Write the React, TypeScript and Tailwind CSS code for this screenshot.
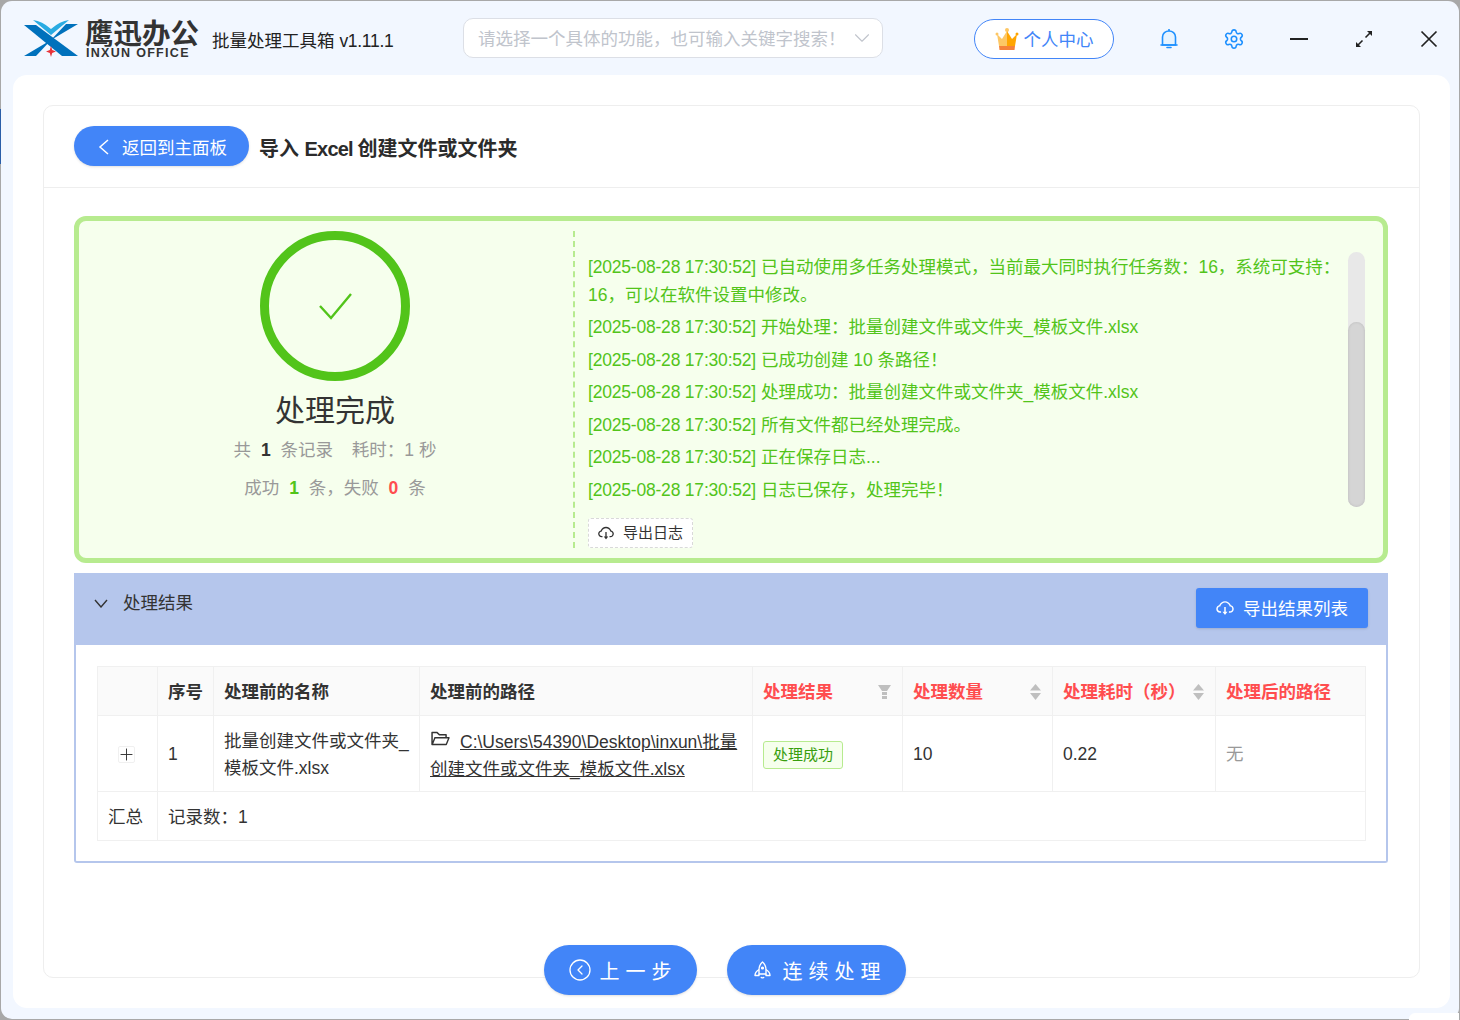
import React from 'react';
import { ChevronDown, CircleChevronLeft, Plus, Settings } from 'lucide-react';
import { AiOutlineCloudDownload, AiOutlineFolderOpen } from 'react-icons/ai';

const logLines = [
  '已自动使用多任务处理模式，当前最大同时执行任务数：16，系统可支持：16，可以在软件设置中修改。',
  '开始处理：批量创建文件或文件夹_模板文件.xlsx',
  '已成功创建 10 条路径！',
  '处理成功：批量创建文件或文件夹_模板文件.xlsx',
  '所有文件都已经处理完成。',
  '正在保存日志...',
  '日志已保存，处理完毕！',
];

const Logo = () => (
  <svg width="54" height="37" viewBox="0 0 54 37">
    <polygon points="0,5 12,5 54,36 38,36" fill="#0071bc" />
    <polygon points="54,4 42,4 12,36 0,36" fill="#0071bc" />
    <path d="M9 0 Q18 1 27 9 Q36 1 45 0 L27 15 Z" fill="#29abe2" />
    <path d="M27 26 L28.2 30 L32 31.5 L28.2 33 L27 37 L25.8 33 L22 31.5 L25.8 30 Z" fill="#e8343a" />
  </svg>
);

const Crown = () => (
  <svg width="24" height="24" viewBox="0 0 24 24">
    <circle cx="12" cy="3" r="2" fill="#fdc765" />
    <circle cx="2" cy="7" r="1.5" fill="#fdc765" />
    <circle cx="22" cy="7" r="1.5" fill="#ffa500" />
    <path d="M2 7 L7 12 L12 4 L12 19 L4 19 Z" fill="#fdc765" />
    <path d="M22 7 L17 12 L12 4 L12 19 L20 19 Z" fill="#ffa500" />
    <path d="M4 19 H20 L19.5 23 H4.5 Z" fill="#f5813a" />
  </svg>
);

const Bell = () => (
  <svg width="18" height="22" viewBox="0 0 18 22" fill="none" stroke="#1e90ff" strokeWidth="1.6">
    <path d="M2.5 17 V9 C2.5 5.5 5.5 3 9 3 C12.5 3 15.5 5.5 15.5 9 V17 Z" fill="#e6f3ff" />
    <path d="M1 17 H17" strokeLinecap="round" />
    <path d="M9 1 V3" />
    <path d="M7 19.5 H11" strokeLinecap="round" />
  </svg>
);

const Expand = () => (
  <svg width="18" height="18" viewBox="0 0 18 18" fill="#222" stroke="#222">
    <path d="M10.5 7.5 L16 2" strokeWidth="1.6" />
    <polygon points="12,1 17,1 17,6" stroke="none" />
    <path d="M7.5 10.5 L2 16" strokeWidth="1.6" />
    <polygon points="1,12 1,17 6,17" stroke="none" />
  </svg>
);

const Close = () => (
  <svg width="18" height="18" viewBox="0 0 18 18" fill="none" stroke="#222" strokeWidth="1.7">
    <path d="M1.5 1.5 L16.5 16.5 M16.5 1.5 L1.5 16.5" />
  </svg>
);

const Rocket = () => (
  <svg width="17" height="18" viewBox="0 0 17 18" fill="none" stroke="#fff" strokeWidth="1.4" strokeLinejoin="round">
    <path d="M8.5 1 C6 3 5 6 5 9 V13 H12 V9 C12 6 11 3 8.5 1 Z" />
    <path d="M5 8.5 C2.5 10 1 12 1 14.5 H5 V13" />
    <path d="M12 8.5 C14.5 10 16 12 16 14.5 H12 V13" />
    <circle cx="8.5" cy="7" r="0.9" fill="#fff" />
    <path d="M7 16 C7.5 17.2 9.5 17.2 10 16" />
  </svg>
);

const SortIcon = () => (
  <svg width="11" height="16" viewBox="0 0 11 16" fill="#bfbfbf">
    <polygon points="5.5,0 11,6.5 0,6.5" />
    <polygon points="0,9 11,9 5.5,16" />
  </svg>
);

const FilterIcon = () => (
  <svg width="13" height="14" viewBox="0 0 13 14" fill="#bfbfbf">
    <polygon points="0,0 13,0 9,6 4,6" />
    <rect x="4" y="7" width="5" height="3" />
    <rect x="4" y="11" width="5" height="3" />
  </svg>
);

const th = 'border-r border-[#f0f0f0] px-[10px] pt-[2px] text-left font-bold text-[17.5px]';
const td = 'border-r border-[#f0f0f0] px-[10px] pt-[2px] text-[17.5px] font-normal leading-[27px]';

export default function App() {
  return (
    <div className="relative h-[1020px] w-[1460px] overflow-hidden bg-[#a8a8a8] pl-px pt-px font-['Liberation_Sans','Noto_Sans_CJK_SC',sans-serif] text-[#333]">
      {/* bits of whatever sits behind the window */}
      <div className="absolute left-0 top-[109px] h-[55px] w-px bg-[#2a5ea8]" />
      <div className="absolute bottom-0 right-px z-10 h-[7px] w-[50px] rounded-tl-[6px] bg-white" />

      <div className="flex h-[1018px] w-[1458px] flex-col rounded-[11px] bg-[#f2f7ff]">
        {/* title bar */}
        <div className="flex h-[74px] shrink-0 items-center pt-[2px]">
          <div className="ml-[23px] -mt-[2px]"><Logo /></div>
          <div className="ml-[7px] flex w-[114px] flex-col">
            <span className="text-[28.5px] font-bold leading-[30px] text-[#333]">鹰迅办公</span>
            <span className="-mt-[2px] ml-px whitespace-nowrap text-[12.5px] font-bold leading-[13px] tracking-[1.3px] text-[#333]">INXUN OFFICE</span>
          </div>
          <span className="ml-[13px] mt-[4px] w-[251px] whitespace-nowrap text-[17.5px] text-[#222]">
            批量处理工具箱 <span className="tracking-[-0.3px]">v1.11.1</span>
          </span>
          <div className="-mt-[2px] flex h-[40px] w-[420px] items-center justify-between rounded-[10px] border border-[#dcdfe6] bg-white pl-[14px] pr-[7px] text-[17.5px] text-[#c0c4cc]">
            <span className="mt-[2px] whitespace-nowrap">请选择一个具体的功能，也可输入关键字搜索！</span>
            <ChevronDown size={26} strokeWidth={1} />
          </div>
          <div className="ml-[91px] flex h-[40px] w-[140px] items-center justify-center gap-[5px] rounded-full border border-[#4285f8] bg-white text-[17.5px] text-[#4285f8]">
            <Crown />
            <span className="mt-[2px]">个人中心</span>
          </div>
          <div className="ml-[46px] flex w-[18px] justify-center"><Bell /></div>
          <div className="ml-[45px] flex w-[22px] justify-center">
            <Settings size={22} strokeWidth={1.7} color="#1e90ff" />
          </div>
          <div className="ml-[45px] h-[2px] w-[18px] bg-[#222]" />
          <div className="ml-[47px]"><Expand /></div>
          <div className="ml-[47px]"><Close /></div>
        </div>

        {/* main panel */}
        <div className="ml-[12px] flex h-[933px] w-[1437px] flex-col rounded-[14px] bg-white px-[30px] pt-[30px]">
          <div className="flex h-[873px] shrink-0 flex-col rounded-[10px] border border-[#eeeeee]">
            <div className="flex h-[82px] shrink-0 items-center border-b border-[#eeeeee] pl-[30px]">
              <button className="mb-[2px] flex h-[40px] w-[175px] items-center rounded-full bg-[#4285f8] pl-[24px] text-[17.5px] text-white shadow-sm">
                <svg className="mt-[2px]" width="11" height="16" viewBox="0 0 11 16" fill="none" stroke="#fff" strokeWidth="1.5">
                  <path d="M10 1 L2 8 L10 15" />
                </svg>
                <span className="ml-[13px] mt-[6px]">返回到主面板</span>
              </button>
              <span className="ml-[10px] mt-[4px] text-[20px] font-bold text-[#2b2b2b]">
                导入 <span className="tracking-[-0.8px]">Excel </span>创建文件或文件夹
              </span>
            </div>

            <div className="px-[30px] pt-[28px]">
              {/* status box */}
              <div className="flex h-[347px] w-[1314px] rounded-[12px] border-[5px] border-[#b7eb8f] bg-[#f6ffed] py-[10px]">
                <div className="flex w-[496px] shrink-0 flex-col items-center border-r-2 border-dashed border-[#b7eb8f] pl-[18px]">
                  <div className="flex h-[150px] w-[150px] items-center justify-center rounded-full border-[9px] border-[#52c41a]">
                    <svg width="33" height="27" viewBox="0 0 33 27" fill="none" stroke="#52c41a" strokeWidth="2.4">
                      <path d="M1 13 L12 25 L32 1" />
                    </svg>
                  </div>
                  <div className="mt-[10px] text-[30px] leading-[40px] text-[#333]">处理完成</div>
                  <div className="mt-[9px] text-[17.5px] leading-[20px] text-[#999]">
                    共 <b className="mx-[5px] text-[#333]">1</b> 条记录 <span className="ml-[14px]">耗时：1 秒</span>
                  </div>
                  <div className="mt-[18px] text-[17.5px] leading-[20px] text-[#999]">
                    成功 <b className="mx-[5px] text-[#52c41a]">1</b> 条，失败 <b className="mx-[5px] text-[#ff4d4f]">0</b> 条
                  </div>
                </div>
                <div className="flex min-w-0 flex-1 pl-[13px]">
                  <div className="flex w-[760px] shrink-0 flex-col">
                    <div className="mt-[23px] flex w-[754px] flex-col gap-[5px] text-[17.5px] leading-[27.5px] text-[#52c41a]">
                      {logLines.map((line, i) => (
                        <div key={i}>
                          <span className="tracking-[-0.2px]">[2025-08-28 17:30:52]</span> {line}
                        </div>
                      ))}
                    </div>
                    <button className="mt-[14px] flex h-[30px] w-[105px] items-center rounded-[3px] border border-dashed border-[#d9d9d9] bg-white pl-[8px] text-[15px] text-[#333]">
                      <AiOutlineCloudDownload size={18} />
                      <span className="ml-[8px]">导出日志</span>
                    </button>
                  </div>
                  <div className="mt-[21px] flex h-[255px] w-[17px] flex-col justify-end rounded-full bg-[#e8e8e8]">
                    <div className="h-[185px] rounded-full bg-[#d5d5d5] shadow-[inset_0_0_3px_rgba(0,0,0,0.12)]" />
                  </div>
                </div>
              </div>

              {/* result header */}
              <div className="mt-[10px] flex h-[72px] w-[1314px] items-start justify-between bg-[#b5c6ec] pl-[20px] pr-[20px]">
                <div className="mt-[17px] flex items-center text-[17.5px] text-[#333]">
                  <svg width="14" height="9" viewBox="0 0 14 9" fill="none" stroke="#333" strokeWidth="1.4">
                    <path d="M1 1 L7 8 L13 1" />
                  </svg>
                  <span className="ml-[15px]">处理结果</span>
                </div>
                <button className="mt-[15px] flex h-[40px] w-[172px] items-center rounded-[3px] bg-[#4285f8] pl-[19px] text-[17.5px] text-white shadow-sm">
                  <AiOutlineCloudDownload size={20} />
                  <span className="ml-[8px] mt-[2px]">导出结果列表</span>
                </button>
              </div>

              {/* result body */}
              <div className="h-[218px] w-[1314px] rounded-b-[3px] border-x-2 border-b-2 border-[#b5c6ec] px-[21px] pt-[21px]">
                <table className="w-[1268px] table-fixed border-collapse border border-[#f0f0f0]">
                  <colgroup>
                    <col className="w-[60px]" />
                    <col className="w-[56px]" />
                    <col className="w-[206px]" />
                    <col className="w-[333px]" />
                    <col className="w-[150px]" />
                    <col className="w-[150px]" />
                    <col className="w-[163px]" />
                    <col className="w-[150px]" />
                  </colgroup>
                  <thead>
                    <tr className="h-[49px] border-b border-[#f0f0f0] bg-[#fafafa]">
                      <th className={th} />
                      <th className={th}>序号</th>
                      <th className={th}>处理前的名称</th>
                      <th className={th}>处理前的路径</th>
                      <th className={`${th} text-[#ff4d4f]`}>
                        <div className="flex items-center justify-between pr-[1px]">处理结果<FilterIcon /></div>
                      </th>
                      <th className={`${th} text-[#ff4d4f]`}>
                        <div className="flex items-center justify-between pr-[1px]">处理数量<SortIcon /></div>
                      </th>
                      <th className={`${th} text-[#ff4d4f]`}>
                        <div className="flex items-center justify-between whitespace-nowrap pr-[1px]">处理耗时（秒）<SortIcon /></div>
                      </th>
                      <th className={`${th} text-[#ff4d4f]`}>处理后的路径</th>
                    </tr>
                  </thead>
                  <tbody>
                    <tr className="h-[76px] border-b border-[#f0f0f0]">
                      <td className={td}>
                        <div className="ml-[10px] flex h-[17px] w-[17px] items-center justify-center rounded-[2px] border border-[#f0f0f0] bg-white">
                          <Plus className="shrink-0" size={19} strokeWidth={1.2} />
                        </div>
                      </td>
                      <td className={td}>1</td>
                      <td className={td}>批量创建文件或文件夹_模板文件.xlsx</td>
                      <td className={`${td} pt-[4px]`}>
                        <AiOutlineFolderOpen className="mr-[9px] inline-block align-[-1px]" size={21} />
                        <span className="underline">C:\Users\54390\Desktop\inxun\批量创建文件或文件夹_模板文件.xlsx</span>
                      </td>
                      <td className={td}>
                        <span className="inline-block h-[28px] w-[80px] rounded-[3px] border border-[#b7eb8f] bg-[#f6ffed] text-center text-[15px] leading-[26px] text-[#389e0d]">处理成功</span>
                      </td>
                      <td className={td}>10</td>
                      <td className={td}>0.22</td>
                      <td className={`${td} text-[#999]`}>无</td>
                    </tr>
                    <tr className="h-[49px]">
                      <td className={td}>汇总</td>
                      <td className={td} colSpan={7}>记录数：1</td>
                    </tr>
                  </tbody>
                </table>
              </div>
            </div>
          </div>

          {/* bottom actions sit over the card's lower border */}
          <div className="relative -mt-[33px] flex justify-center gap-[30px] pr-[14px]">
            <button className="flex h-[50px] w-[153px] items-center gap-[8px] rounded-full bg-[#4285f8] pl-[24px] text-[20px] tracking-[6px] text-white shadow-sm">
              <CircleChevronLeft size={24} strokeWidth={1.3} />
              <span className="mt-[4px] whitespace-nowrap">上一步</span>
            </button>
            <button className="flex h-[50px] w-[179px] items-center gap-[12px] rounded-full bg-[#4285f8] pl-[27px] text-[20px] tracking-[6px] text-white shadow-sm">
              <Rocket />
              <span className="mt-[4px] whitespace-nowrap">连续处理</span>
            </button>
          </div>
        </div>
      </div>
    </div>
  );
}
